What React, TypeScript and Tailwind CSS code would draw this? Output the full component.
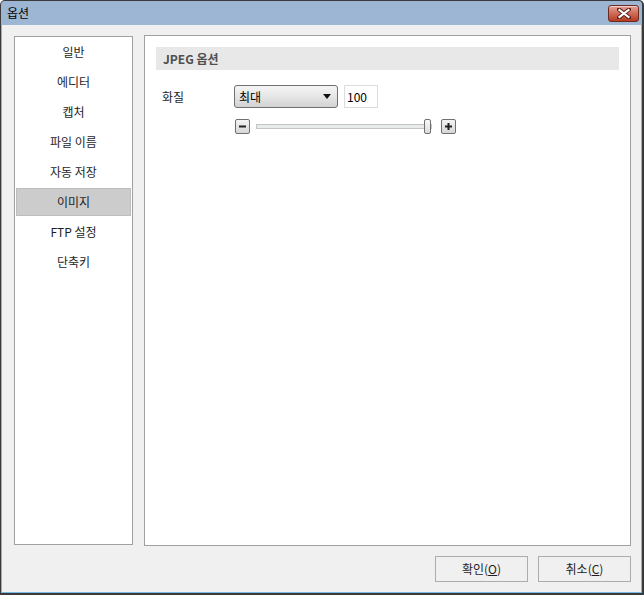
import React from "react";

const font = { fontFamily: '"Malgun Gothic", "Noto Sans CJK KR", "Noto Sans", sans-serif' };

const menu = ["일반", "에디터", "캡처", "파일 이름", "자동 저장", "이미지", "FTP 설정", "단축키"];

const CloseButton = () => (
  <div className="w-[31px] h-[17px] rounded-[3px] border border-[#6b2a22] bg-gradient-to-b from-[#e3a398] via-[#cf6b58] to-[#b8391f] flex items-center justify-center shadow-[inset_0_1px_0_rgba(255,255,255,0.5)]">
    <svg width="14" height="11" viewBox="0 0 14 11">
      <path d="M2 1.5 L12 9.5 M12 1.5 L2 9.5" stroke="#5a2019" strokeWidth="4" strokeLinecap="square" />
      <path d="M2.5 2 L11.5 9 M11.5 2 L2.5 9" stroke="#ffffff" strokeWidth="2.2" strokeLinecap="square" />
    </svg>
  </div>
);

const SmallButton = ({ plus }: { plus?: boolean }) => (
  <div className="w-[15px] h-[15px] rounded-[2px] border border-[#707070] bg-gradient-to-b from-[#f4f4f4] to-[#d6d6d6] flex items-center justify-center">
    <svg width="9" height="9" viewBox="0 0 9 9">
      <rect x="1" y="3.5" width="7" height="2" fill="#222" />
      {plus && <rect x="3.5" y="1" width="2" height="7" fill="#222" />}
    </svg>
  </div>
);

export default function App() {
  return (
    <div
      className="w-[644px] h-[595px] flex flex-col border-l border-t border-r-2 border-b-2 border-[#3a3a3a] rounded-t-[5px] overflow-hidden bg-gradient-to-b from-[#9cb5d3] to-[#bfd4ea] text-[12px] text-[#1e1e1e]"
      style={font}
    >
      {/* Title bar */}
      <div className="h-[24px] flex items-center justify-between pl-[6px] pr-[3px] shrink-0">
        <span className="text-[12px] text-black">옵션</span>
        <CloseButton />
      </div>

      {/* Client area */}
      <div className="flex-1 flex flex-col bg-[#f0f0f0] border-l border-r border-b border-[#7ab8e0] pl-[12px] pr-[10px] pt-[10px] pb-[10px]">
        <div className="flex h-[511px] gap-[11px]">
          {/* Left menu */}
          <div className="w-[119px] my-[1px] border border-[#a0a0a0] bg-white flex flex-col">
            {menu.map((m) =>
              m === "이미지" ? (
                <div key={m} className="h-[30px] flex items-center px-[1px] py-[1px]">
                  <div className="w-full h-[28px] flex items-center justify-center bg-[#cccccc] border border-[#bdbdbd]">
                    {m}
                  </div>
                </div>
              ) : (
                <div key={m} className="h-[30px] flex items-center justify-center">
                  {m}
                </div>
              )
            )}
          </div>

          {/* Right content */}
          <div className="w-[487px] border border-[#a0a0a0] bg-white p-[11px]">
            <div className="h-[23px] bg-[#e8e8e8] flex items-center pl-[7px] font-bold text-[#505050]">
              JPEG 옵션
            </div>

            <div className="flex items-center mt-[15px]">
              <div className="w-[78px] pl-[6px]">화질</div>
              <div className="w-[104px] h-[23px] rounded-[3px] border border-[#707070] bg-gradient-to-b from-[#f5f5f5] via-[#e6e6e6] to-[#d2d2d2] flex items-center justify-between pl-[4px] pr-[6px]">
                <span className="text-black">최대</span>
                <svg width="8" height="5" viewBox="0 0 8 5">
                  <path d="M0 0 L8 0 L4 5 Z" fill="#111" />
                </svg>
              </div>
              <div className="w-[34px] h-[23px] ml-[6px] border border-[#dcdcdc] bg-white flex items-center pl-[2px] text-black">
                100
              </div>
            </div>

            <div className="flex items-center mt-[11px] ml-[79px]">
              <SmallButton />
              <div className="relative ml-[6px] w-[176px] h-[5px] border border-[#c4c4c4] bg-[#e8ecec]">
                <div className="absolute right-0 top-[-6px] w-[7px] h-[15px] rounded-[2px] border border-[#707070] bg-gradient-to-b from-[#fafafa] to-[#dcdcdc]" />
              </div>
              <div className="ml-[9px]">
                <SmallButton plus />
              </div>
            </div>
          </div>
        </div>

        {/* Buttons */}
        <div className="flex justify-end gap-[10px] mt-[10px]">
          <div className="w-[93px] h-[26px] border border-[#acacac] bg-[#f0f0f0] flex items-center justify-center">
            확인(<span className="underline">O</span>)
          </div>
          <div className="w-[93px] h-[26px] border border-[#acacac] bg-[#f0f0f0] flex items-center justify-center">
            취소(<span className="underline">C</span>)
          </div>
        </div>
      </div>
    </div>
  );
}
